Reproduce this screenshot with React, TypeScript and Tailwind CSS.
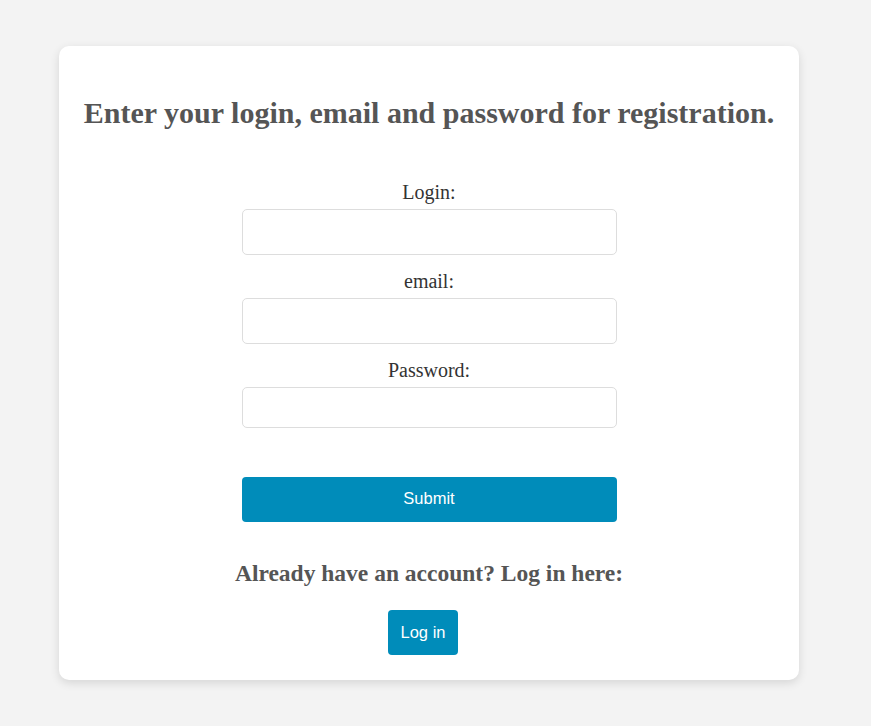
export default function App() {
  const fields = [
    { label: "Login:", type: "text", h: "h-[46px]" },
    { label: "email:", type: "email", h: "h-[46px]" },
    { label: "Password:", type: "password", h: "h-[41px]" },
  ];

  return (
    <div className="min-h-[726px] w-full bg-[#f3f3f3] pt-[46px] pb-[46px] font-['Liberation_Serif',serif]">
      <div className="ml-[59px] w-[740px] rounded-[10px] bg-white pt-[50px] pb-[25px] shadow-[0_3px_10px_rgba(0,0,0,0.12)] flex flex-col items-center">
        <h1 className="text-[30px] leading-[34px] font-bold text-[#555]">
          Enter your login, email and password for registration.
        </h1>

        <form className="mt-[50px] w-[375px] flex flex-col" onSubmit={(e) => e.preventDefault()}>
          {fields.map((f, i) => (
            <div key={f.label} className={i > 0 ? "mt-[14px] flex flex-col" : "flex flex-col"}>
              <label className="text-center text-[20px] leading-[24px] text-[#333]">{f.label}</label>
              <input
                type={f.type}
                className={`mt-[5px] ${f.h} w-full rounded-[5px] border border-[#ddd] bg-white px-3 outline-none`}
              />
            </div>
          ))}

          <button
            type="submit"
            className="mt-[49px] h-[45px] w-full rounded-[4px] bg-[#008cba] pb-[2px] font-['Liberation_Sans',sans-serif] text-[16.5px] text-white"
          >
            Submit
          </button>
        </form>

        <h3 className="mt-[37px] text-[23.5px] leading-[28px] font-bold text-[#555]">
          Already have an account? Log in here:
        </h3>

        <button className="mt-[23px] mr-[12px] h-[45px] w-[70px] rounded-[4px] bg-[#008cba] font-['Liberation_Sans',sans-serif] text-[16.5px] text-white">
          Log in
        </button>
      </div>
    </div>
  );
}
